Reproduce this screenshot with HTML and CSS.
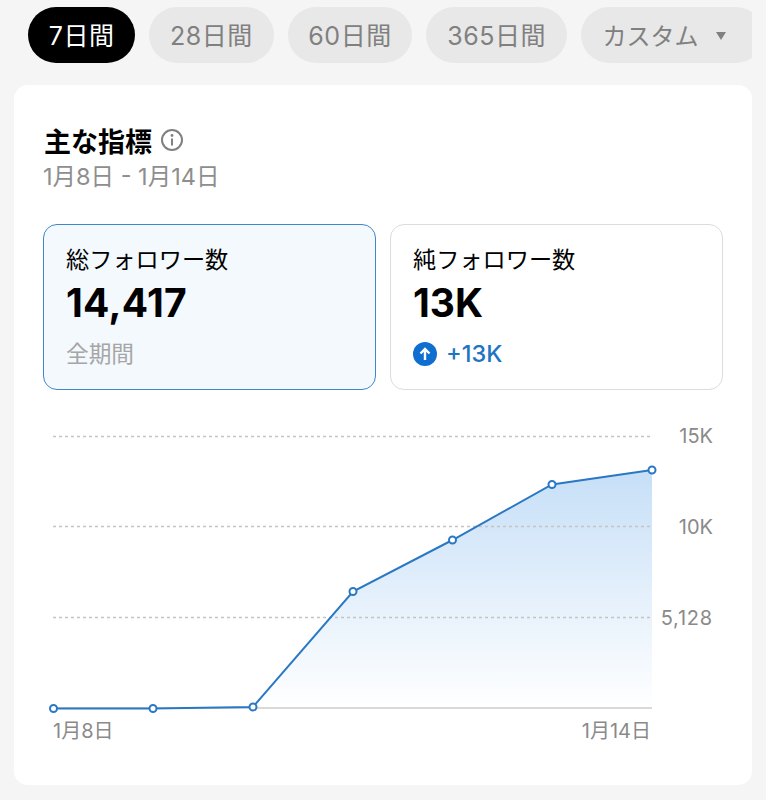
FILE: index.html
```html
<!DOCTYPE html>
<html lang="ja">
<head>
  <meta charset="UTF-8">
  <title>主な指標</title>
  <meta name="viewport" content="width=device-width, initial-scale=1.0" />
  <link rel="stylesheet" href="styles.css">
</head>
<body>
  <div class="tabs">
    <div class="tab active">7日間</div>
    <div class="tab">28日間</div>
    <div class="tab">60日間</div>
    <div class="tab">365日間</div>
    <div class="tab custom">カスタム <span class="caret"></span></div>
  </div>

  <div class="card">
    <div class="title-row">
      <h1>主な指標</h1>
      <svg class="info" width="24" height="24" viewBox="0 0 24 24">
        <circle cx="12" cy="12" r="10" fill="none" stroke="#808080" stroke-width="2"/>
        <rect x="11" y="10.5" width="2" height="7" fill="#808080"/>
        <circle cx="12" cy="7.5" r="1.4" fill="#808080"/>
      </svg>
    </div>
    <p class="range">1月8日 - 1月14日</p>

    <div class="stats">
      <div class="stat selected">
        <div class="stat-label">総フォロワー数</div>
        <div class="stat-value">14,417</div>
        <div class="stat-note">全期間</div>
      </div>
      <div class="stat">
        <div class="stat-label">純フォロワー数</div>
        <div class="stat-value">13K</div>
        <div class="stat-delta">
          <svg width="24" height="24" viewBox="0 0 24 24">
            <circle cx="12" cy="12" r="12" fill="#0f6fd0"/>
            <path d="M12 18V7M7.5 11.5L12 7l4.500 4.500" fill="none" stroke="#fff" stroke-width="2.400"/>
          </svg>
          +13K
        </div>
      </div>
    </div>

    <!-- viewBox uses page coordinates -->
    <svg class="chart" width="680" height="330" viewBox="43 420 680 330">
      <defs>
        <linearGradient id="fade" x1="0" y1="470" x2="0" y2="708" gradientUnits="userSpaceOnUse">
          <stop offset="0" stop-color="#c6dff7"/>
          <stop offset="1" stop-color="#ffffff"/>
        </linearGradient>
      </defs>
      <path d="M53.500 708.500L153 708.500L253 707L353 591.500L452.500 540L552 484.500L652 470V708H53.500Z" fill="url(#fade)"/>
      <g class="grid">
        <line x1="53" y1="436.500" x2="651" y2="436.500"/>
        <line x1="53" y1="526.500" x2="651" y2="526.500"/>
        <line x1="53" y1="617.500" x2="651" y2="617.500"/>
      </g>
      <line class="base" x1="53" y1="708" x2="652" y2="708"/>
      <path class="trend" d="M53.500 708.500L153 708.500L253 707L353 591.500L452.500 540L552 484.500L652 470"/>
      <g class="dots">
        <circle cx="53.500" cy="708.500" r="3.500"/>
        <circle cx="153" cy="708.500" r="3.500"/>
        <circle cx="253" cy="707" r="3.500"/>
        <circle cx="353" cy="591.500" r="3.500"/>
        <circle cx="452.500" cy="540" r="3.500"/>
        <circle cx="552" cy="484.500" r="3.500"/>
        <circle cx="652" cy="470" r="3.500"/>
      </g>
      <g class="axis">
        <text x="713" y="442.500" text-anchor="end">15K</text>
        <text x="713" y="533.500" text-anchor="end">10K</text>
        <text class="wide" x="713" y="624.500" text-anchor="end">5,128</text>
        <text x="53" y="738">1月8日</text>
        <text x="651" y="738" text-anchor="end">1月14日</text>
      </g>
    </svg>
  </div>
</body>
</html>
```

FILE: styles.css
```css
body {
  margin: 0;
  width: 766px;
  height: 800px;
  overflow: hidden;
  background: #f5f5f5;
  color: #000;
  font-family: 'Inter', 'Noto Sans CJK JP', sans-serif;
}

/* the last pill is cut off by the scroll row */
.tabs {
  display: flex;
  gap: 14px;
  width: 752px;
  box-sizing: border-box;
  padding: 7px 0 0 28px;
  overflow: hidden;
}

.tab {
  display: flex;
  align-items: center;
  flex-shrink: 0;
  height: 56px;
  box-sizing: border-box;
  padding: 0 20.800px 2px;
  border-radius: 28px;
  background: #e8e8e8;
  color: #808080;
  font-size: 25px;
  letter-spacing: 0.5px;
}

.tab.active {
  background: #000;
  color: #fff;
}

.tab.custom {
  width: 183px;
  gap: 9px;
  padding-left: 21.800px;
  font-size: 24px;
  letter-spacing: 0;
}

.caret {
  width: 0;
  height: 0;
  margin: 3px 0 0 9px;
  border-left: 5.500px solid transparent;
  border-right: 5.500px solid transparent;
  border-top: 8px solid #808080;
}

.card {
  margin: 22px 14px 0;
  height: 700px;
  box-sizing: border-box;
  padding: 37px 29px 0;
  background: #fff;
  border-radius: 14px;
}

.title-row {
  display: flex;
  align-items: center;
  gap: 8px;
  height: 36px;
  padding-left: 1px;
}

h1 {
  margin: 0;
  font-size: 27px;
  font-weight: 700;
}

.range {
  margin: 3px 0 0;
  font-size: 23.500px;
  line-height: 32px;
  color: #8e8e8e;
}

.stats {
  display: flex;
  gap: 14px;
  margin-top: 31px;
}

.stat {
  flex: 1;
  height: 166px;
  box-sizing: border-box;
  padding: 18px 22px 0;
  border: 1px solid #dcdcdc;
  border-radius: 14px;
}

.stat.selected {
  background: #f3f9fd;
  border-color: #3f87c9;
}

.stat-label {
  font-size: 23.200px;
  line-height: 34px;
}

.stat-value {
  margin-top: 1px;
  font-size: 39px;
  font-weight: 700;
  line-height: 50px;
}

.selected .stat-value {
  letter-spacing: 0.3px;
}

.stat-note {
  margin-top: 8px;
  font-size: 22.700px;
  line-height: 36px;
  color: #a6a6a6;
}

.stat-delta {
  display: flex;
  align-items: center;
  gap: 9px;
  margin-top: 8px;
  font-size: 23.500px;
  font-weight: 500;
  line-height: 36px;
  color: #1f74c4;
}

.chart {
  display: block;
  margin-top: 30px;
}

.grid line {
  stroke: #c4c4c4;
  stroke-width: 1.500;
  stroke-dasharray: 3 3;
}

.base {
  stroke: #d9d9d9;
  stroke-width: 2;
}

.trend {
  fill: none;
  stroke: #2a78c4;
  stroke-width: 2;
}

.dots circle {
  fill: #fff;
  stroke: #2a78c4;
  stroke-width: 2;
}

.axis text {
  font-size: 20px;
  fill: #8a8a8a;
}

.axis .wide {
  letter-spacing: 0.8px;
}
```
